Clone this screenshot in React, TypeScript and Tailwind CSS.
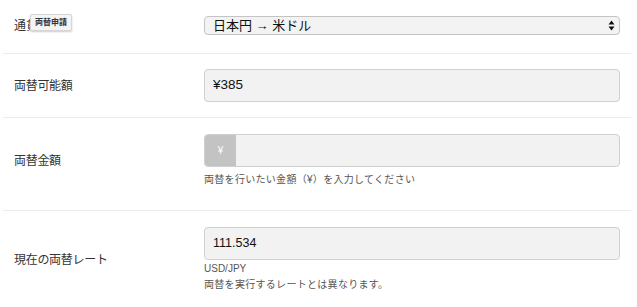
import React from "react";

const jp = { fontFamily: '"Liberation Sans", "Noto Sans CJK JP", sans-serif' };

function Row({ label, children, className }: { label: string; children: React.ReactNode; className: string }) {
  return (
    <div className={`flex ml-[3px] mr-[6px] ${className}`}>
      <div className="w-[201px] shrink-0 pl-[11px] flex items-center text-[12px] text-[#333] tracking-[-0.3px]">{label}</div>
      <div className="w-[416px]">{children}</div>
    </div>
  );
}

export default function App() {
  return (
    <div className="w-[637px] h-[307px] bg-white relative overflow-hidden" style={jp}>
      {/* Row 1 */}
      <div className="flex ml-[3px] mr-[6px] pt-[16px] pb-[18px] border-b border-[#ebebeb]">
        <div className="w-[201px] shrink-0 pl-[11px] flex items-center text-[12px] text-[#333]">通貨</div>
        <div className="w-[416px] h-[19px] rounded-[4px] border border-[#c4c4c4] bg-[#f3f3f3] flex items-center pl-[8px] pr-[4px]">
          <span className="text-[13px] text-[#111] leading-none">日本円 → 米ドル</span>
          <svg className="ml-auto" width="7" height="11" viewBox="0 0 7 11">
            <path d="M3.5 0.5 L6.5 4.5 L0.5 4.5 Z" fill="#111" />
            <path d="M3.5 10.5 L6.5 6.5 L0.5 6.5 Z" fill="#111" />
          </svg>
        </div>
      </div>
      <div className="absolute left-[30px] top-[14px] w-[42px] h-[17px] bg-[#f4f4f4] border border-[#d6d6d6] rounded-[2px] shadow-[0_1px_2px_rgba(0,0,0,0.2)] flex items-center justify-center text-[8px] font-bold text-[#333]">
        両替申請
      </div>

      {/* Row 2 */}
      <Row label="両替可能額" className="pt-[15px] pb-[15px] border-b border-[#ebebeb]">
        <div className="h-[33px] rounded-[4px] border border-[#d0d0d0] bg-[#f2f2f2] flex items-center pl-[8px] text-[13.5px] text-[#111]">
          ¥385
        </div>
      </Row>

      {/* Row 3 */}
      <Row label="両替金額" className="pt-[16px] pb-[22px] border-b border-[#ebebeb]">
        <div className="h-[33px] rounded-[4px] border border-[#d0d0d0] bg-[#f2f2f2] flex overflow-hidden">
          <div className="w-[31px] bg-[#c3c3c3] flex items-center justify-center text-[10px] text-white">¥</div>
        </div>
        <div className="mt-[5px] text-[10px] text-[#555] tracking-[0.3px] leading-[16px]">両替を行いたい金額（¥）を入力してください</div>
      </Row>

      {/* Row 4 */}
      <Row label="現在の両替レート" className="pt-[16px]">
        <div className="h-[33px] rounded-[4px] border border-[#d0d0d0] bg-[#f2f2f2] flex items-center pl-[8px] text-[12.5px] text-[#111]">
          111.534
        </div>
        <div className="mt-[1px] text-[10px] text-[#555] leading-[16px]">USD/JPY</div>
        <div className="text-[10px] text-[#555] leading-[16px] tracking-[0.3px]">両替を実行するレートとは異なります。</div>
      </Row>
    </div>
  );
}
